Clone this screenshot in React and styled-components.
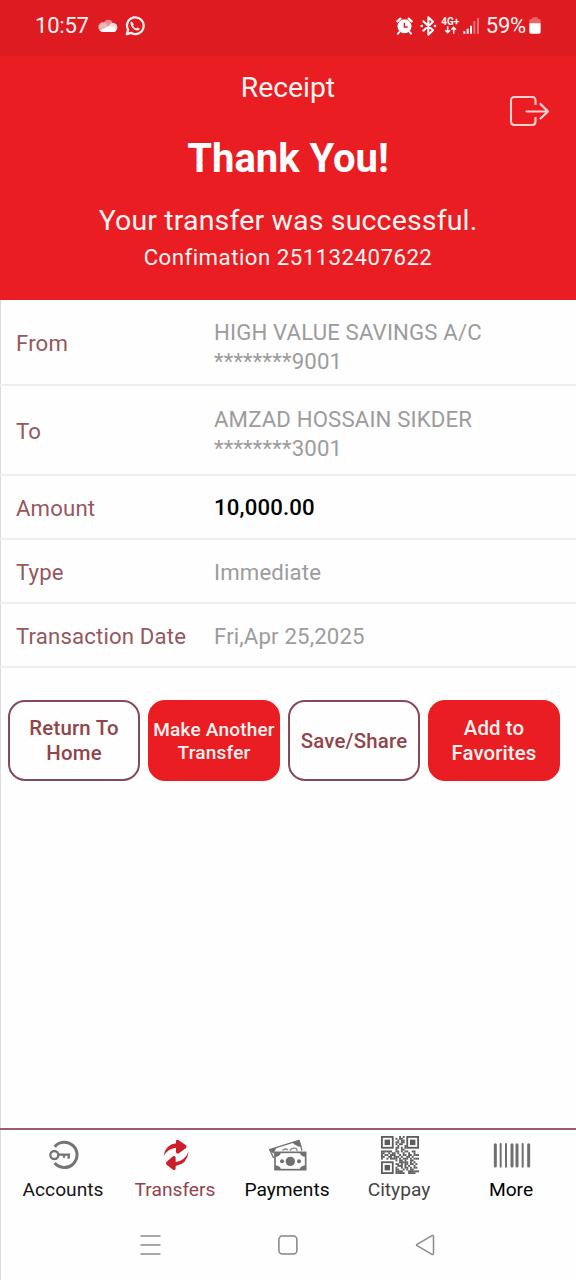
import React from 'react'
import styled, { createGlobalStyle } from 'styled-components'

const GlobalStyle = createGlobalStyle`
  * {
    box-sizing: border-box;
  }
  body {
    margin: 0;
    background: #fefefe;
    font-family: Roboto, "Liberation Sans", sans-serif;
  }
`;

const Container = styled.div`
    width: 576px;
    height: 1280px;
    display: flex;
    flex-direction: column;
    background-color: #fefefe;
    box-shadow: inset 1px 0 0 #dcdcdc;
`;

const StatusBar = styled.div`
    height: 56px;
    padding: 0 35px 5px 35px;
    display: flex;
    align-items: center;
    justify-content: space-between;
    background-color: #df1b22;
    color: #fff3f2;
`;

const StatusGroup = styled.div`
    display: flex;
    align-items: center;
`;

const StatusText = styled.span`
    margin-left: ${props => props.$left || "0px"};
    font-size: 22px;
    line-height: 26px;
    letter-spacing: -0.2px;
`;

const Icon = styled.svg`
    display: block;
    flex: none;
    margin-left: ${props => props.$left || "0px"};
`;

const Header = styled.header`
    height: 244px;
    display: flex;
    flex-direction: column;
    align-items: center;
    background-color: #ea1d23;
    color: #fff5f4;
    position: relative;
`;

const Title = styled.h2`
    margin: 15px 0 0;
    font-size: 28.3px;
    line-height: 34px;
    font-weight: 400;
`;

const Thanks = styled.h1`
    margin: 30px 0 0;
    font-size: 40px;
    line-height: 48px;
    font-weight: 700;
    color: white;
`;

const Message = styled.p`
    margin: 21px 0 0;
    font-size: 28.5px;
    line-height: 34px;
    letter-spacing: 0.15px;
`;

const Confirmation = styled.p`
    margin: 6px 0 0;
    font-size: 22.2px;
    line-height: 26px;
    letter-spacing: 0.5px;
`;

const Logout = styled.button`
    position: absolute;
    top: 39px;
    right: 25px;
    padding: 0;
    border: none;
    background: transparent;
    cursor: pointer;
`;

const Row = styled.div`
    height: ${props => props.$height}px;
    padding: 1px 16px 0;
    display: flex;
    align-items: center;
    border-bottom: 2px solid #eeeeee;
    font-size: 22.2px;
    line-height: 29px;
    letter-spacing: 0.15px;
`;

const Label = styled.div`
    width: 198px;
    padding-top: 1px;
    color: #96585d;
`;

const Value = styled.div`
    color: ${props => props.$strong ? "black" : "#9c9c9c"};
    font-weight: ${props => props.$strong ? "500" : "400"};
    padding-top: ${props => props.$top || "0px"};
`;

const Actions = styled.div`
    display: grid;
    grid-template-columns: repeat(4, 1fr);
    gap: 8px;
    padding: 32px 16px 0 8px;
`;

const Button = styled.button`
    height: 81px;
    padding: ${props => props.$single ? "2px 0 0" : "0"};
    border-radius: 17px;
    border: 2px solid ${props => props.$filled ? "#ea1d23" : "#854a58"};
    background-color: ${props => props.$filled ? "#ea1d23" : "#fefefe"};
    color: ${props => props.$filled ? "#fff3f2" : "#914549"};
    font-family: inherit;
    font-size: ${props => props.$small ? "19px" : "20.4px"};
    line-height: ${props => props.$small ? "23px" : "25px"};
    font-weight: 500;
    letter-spacing: ${props => props.$small ? "0.2px" : props.$filled ? "0.1px" : "0.2px"};
    white-space: pre-line;
    cursor: pointer;
`;

const TabBar = styled.nav`
    height: 82px;
    margin-top: auto;
    padding: 0 9px 0 7px;
    display: grid;
    grid-template-columns: repeat(5, 1fr);
    border-top: 2px solid #96606a;
`;

const Tab = styled.div`
    display: flex;
    flex-direction: column;
    align-items: center;
    font-size: 19.2px;
    line-height: 24px;
    color: ${props => props.$color || "#161616"};
`;

const TabIcon = styled.div`
    height: 48px;
    padding: 2px 0 0 1px;
    display: flex;
    align-items: center;
`;

const SystemNav = styled.div`
    height: 70px;
    padding: 0 141px 0 140px;
    display: flex;
    align-items: center;
    justify-content: space-between;
`;

const CloudIcon = () => (
    <Icon $left="9px" width="20" height="14" viewBox="0 0 60 42">
        <circle cx="31" cy="16" r="14" fill="#f08c90" />
        <circle cx="15" cy="24" r="14" fill="#f5b5b6" />
        <circle cx="45" cy="25" r="13" fill="#fbdcdc" />
        <path d="M5 34 Q18 30 30 22 Q42 20 56 32 Q54 39 46 39 H14 Q8 39 5 34z" fill="#fff" />
    </Icon>
)

const WhatsappIcon = () => (
    <Icon $left="7px" width="20" height="20" viewBox="0 0 24 24">
        <path d="M2.200 21.800l1.500-5.300A10 10 0 1 1 7.500 20.300z" fill="none" stroke="#fff3f2" strokeWidth="2.700" strokeLinejoin="round" />
        <path d="M8 6.500c-.9.300-1.600 1.300-1.400 2.600.5 4 4.200 7.800 8.400 8.300 1.300.1 2.500-.8 2.700-2l-2.900-1.700-1.500 1.400c-1.700-.7-3-2-3.700-3.700l1.200-1.400z" fill="#fff3f2" />
    </Icon>
)

const AlarmIcon = () => (
    <Icon width="17" height="18" viewBox="0 0 51 54">
        <path d="M10 45l-4 5M41 45l4 5" stroke="#fff" strokeWidth="6" strokeLinecap="round" />
        <path d="M4 13l9-8M47 13L38 5" stroke="#fff" strokeWidth="7" strokeLinecap="round" />
        <circle cx="25.500" cy="28" r="21" fill="#fff" />
        <path d="M25 17v13h10" fill="none" stroke="#df1b22" strokeWidth="4" />
    </Icon>
)

const BluetoothIcon = () => (
    <Icon $left="7px" width="17" height="20" viewBox="0 0 51 60">
        <path d="M10 16l29 27-14 13V4l14 13-29 27" fill="none" stroke="#fff" strokeWidth="6" strokeLinejoin="round" strokeLinecap="round" />
        <circle cx="5" cy="30" r="4" fill="#fff" />
        <circle cx="45" cy="30" r="4" fill="#fff" />
    </Icon>
)

const Network = styled.div`
    width: 19px;
    margin-left: 4px;
    display: flex;
    flex-direction: column;
    align-items: center;
    font-size: 10px;
    line-height: 9px;
    font-weight: 700;
`;

const NetworkIcon = () => (
    <Network>
        4G+
        <Icon width="13" height="8" viewBox="0 0 39 24">
            <path d="M11 1v18M4 13l7 7 7-7M29 23V5M22 11l7-7 7 7" fill="none" stroke="#fff" strokeWidth="4.500" />
        </Icon>
    </Network>
)

const SignalIcon = () => (
    <Icon $left="3px" width="17" height="17" viewBox="0 0 51 51">
        <path d="M4 43v7M14 35v15M24 26v24" stroke="#fff" strokeWidth="6" />
        <path d="M34 12v38M45 3v47" stroke="#ee6c70" strokeWidth="6" />
    </Icon>
)

const BatteryIcon = () => (
    <Icon $left="3px" width="12" height="17" viewBox="0 0 36 51">
        <path d="M10 1h16v5h4q5 0 5 5v10H1V11q0-5 5-5h4z" fill="#ec6468" />
        <path d="M1 19h34v26q0 5-5 5H6q-5 0-5-5z" fill="#fff" />
    </Icon>
)

const LogoutIcon = () => (
    <Icon width="42" height="34" viewBox="0 0 42 34">
        <path d="M26.500 10V5.500Q26.500 2 23 2H5.500Q2 2 2 5.500V26.500Q2 30 5.500 30H23Q26.500 30 26.500 26.500V22" fill="none" stroke="#ffd2d1" strokeWidth="2.100" />
        <path d="M17.500 16.500H39M31.500 9L39 16.500L31.500 23.500" fill="none" stroke="#ffd2d1" strokeWidth="2.200" strokeLinecap="round" strokeLinejoin="round" />
    </Icon>
)

const AccountsIcon = () => (
    <Icon width="30" height="30" viewBox="147 61 90 90">
        <path d="M164 81A38 38 0 1 1 164 130" fill="none" stroke="#747474" strokeWidth="9" />
        <circle cx="163" cy="106" r="12" fill="none" stroke="#747474" strokeWidth="7" />
        <path d="M176 105H210M192 105V114M206 103V117" fill="none" stroke="#747474" strokeWidth="7" />
    </Icon>
)

const TransfersIcon = () => (
    <Icon width="28" height="34" viewBox="487 56 84 102">
        <path d="M492 110Q497 76 529 72V65Q530 59 536 62L559 78Q563 82 559 86L538 102Q530 105 529 98V85Q504 88 492 110z" fill="#cb202b" />
        <path d="M567 97Q562 134 528 140V148Q526 154 520 151L501 136Q496 132 501 127L520 111Q527 107 528 115V128Q554 125 567 97z" fill="#cb202b" />
    </Icon>
)

const PaymentsIcon = () => (
    <Icon width="38" height="34" viewBox="118 56 114 102">
        <path d="M132 116L120 91L208 63L217 94" fill="none" stroke="#707070" strokeWidth="4" strokeLinejoin="round" />
        <path d="M119 91l22-7-10 19zM187 69l22-7 7 20q-14 2-29-13z" fill="#707070" />
        <path d="M158 94q8-9 17-2M181 94q4-10 18-7l4 8" fill="none" stroke="#888" strokeWidth="4" />
        <rect x="136" y="99" width="92" height="52" fill="#fefefe" stroke="#707070" strokeWidth="5" />
        <path d="M136 99h18q-2 13-18 14zM228 99h-18q2 13 18 14zM136 151h18q-2-12-18-13zM228 151h-18q2-12 18-13z" fill="#707070" />
        <circle cx="182" cy="126" r="14" fill="#707070" />
        <circle cx="157" cy="126" r="6" fill="#707070" />
        <circle cx="208" cy="126" r="6" fill="#707070" />
    </Icon>
)

// 21 x 21 modules, the three finder squares are drawn apart
const qrRows = [
    "..........#.#........",
    "........#.##.........",
    ".........#.##........",
    "........##.##........",
    "........#.##.........",
    ".........#...#.......",
    "........##.#.#.......",
    "........#..##........",
    "######..##.#.##..##..",
    "##..#.##.#..#..#..#..",
    "#.##.###..#.##.##.###",
    "##..##.###.#..##.#...",
    "#..#.####.#.###.#.###",
    "........#.##.#..##...",
    "..........#####.#.#..",
    "........##.#.##.##.#.",
    ".........###.#.#..#..",
    "........#..#.##.#.##.",
    "........##..#.#.##...",
    "........####...######",
    "........#####..####..",
];

const CitypayIcon = () => (
    <Icon width="38" height="38" viewBox="0 0 21 21">
        {qrRows.map((row, y) => row.split("").map((cell, x) => (
            cell === "#" && <rect key={x + "-" + y} x={x} y={y} width="1.050" height="1.050" fill="#5c5c5c" />
        )))}
        {[[0, 0], [14, 0], [0, 14]].map(([x, y]) => (
            <g key={x + "-" + y}>
                <rect x={x + 0.5} y={y + 0.5} width="6" height="6" fill="none" stroke="#5c5c5c" strokeWidth="1" />
                <rect x={x + 2} y={y + 2} width="3" height="3" fill="#5c5c5c" />
            </g>
        ))}
    </Icon>
)

const MoreIcon = () => (
    <Icon width="38" height="25" viewBox="789 67 114 75">
        <path d="M796 72V136M846 72V136M861 72V136M896 72V136" stroke="#707070" strokeWidth="9" strokeLinecap="round" />
        <path d="M812 70V138M828 70V138M878 70V138" stroke="#707070" strokeWidth="6" strokeLinecap="round" />
    </Icon>
)

const details = [
    { label: "From", lines: ["HIGH VALUE SAVINGS A/C", "********9001"], height: 86, top: "9px" },
    { label: "To", lines: ["AMZAD HOSSAIN SIKDER", "********3001"], height: 90, top: "7px" },
    { label: "Amount", lines: ["10,000.00"], height: 64, strong: true },
    { label: "Type", lines: ["Immediate"], height: 64, top: "1px" },
    { label: "Transaction Date", lines: ["Fri,Apr 25,2025"], height: 64, top: "1px" },
];

const tabs = [
    { name: "Accounts", icon: <AccountsIcon /> },
    { name: "Transfers", icon: <TransfersIcon />, color: "#94434d" },
    { name: "Payments", icon: <PaymentsIcon />, color: "#080808" },
    { name: "Citypay", icon: <CitypayIcon />, color: "#444" },
    { name: "More", icon: <MoreIcon />, color: "#000" },
];

const App = () => {
  return (
    <Container>
        <GlobalStyle />
        <StatusBar>
            <StatusGroup>
                <StatusText>10:57</StatusText>
                <CloudIcon />
                <WhatsappIcon />
            </StatusGroup>
            <StatusGroup>
                <AlarmIcon />
                <BluetoothIcon />
                <NetworkIcon />
                <SignalIcon />
                <StatusText $left="6px">59%</StatusText>
                <BatteryIcon />
            </StatusGroup>
        </StatusBar>

        <Header>
            <Title>Receipt</Title>
            <Thanks>Thank You!</Thanks>
            <Message>Your transfer was successful.</Message>
            <Confirmation>Confimation 251132407622</Confirmation>
            <Logout><LogoutIcon /></Logout>
        </Header>

        {details.map(item => (
            <Row key={item.label} $height={item.height}>
                <Label>{item.label}</Label>
                <Value $strong={item.strong} $top={item.top}>
                    {item.lines.map(line => <div key={line}>{line}</div>)}
                </Value>
            </Row>
        ))}

        <Actions>
            <Button>{"Return To\nHome"}</Button>
            <Button $filled $small>{"Make Another\nTransfer"}</Button>
            <Button $single>Save/Share</Button>
            <Button $filled>{"Add to\nFavorites"}</Button>
        </Actions>

        <TabBar>
            {tabs.map(tab => (
                <Tab key={tab.name} $color={tab.color}>
                    <TabIcon>{tab.icon}</TabIcon>
                    {tab.name}
                </Tab>
            ))}
        </TabBar>

        <SystemNav>
            <Icon width="21" height="22" viewBox="0 0 21 22">
                <path d="M0.500 2H20.500M0.500 11H20.500M0.500 20H20.500" stroke="#8b8b8b" strokeWidth="1.500" />
            </Icon>
            <Icon width="20" height="20" viewBox="0 0 20 20">
                <rect x="0.900" y="0.900" width="18" height="18" rx="3.500" fill="none" stroke="#858585" strokeWidth="1.500" />
            </Icon>
            <Icon width="20" height="22" viewBox="0 0 20 22">
                <path d="M18.500 2.500V19.300Q18.500 21 17 20.300L2 11.700Q1 11 2 10.300L17 1.600Q18.500 1 18.500 2.500z" fill="none" stroke="#8b8b8b" strokeWidth="1.500" strokeLinejoin="round" />
            </Icon>
        </SystemNav>
    </Container>
  )
}

export default App
